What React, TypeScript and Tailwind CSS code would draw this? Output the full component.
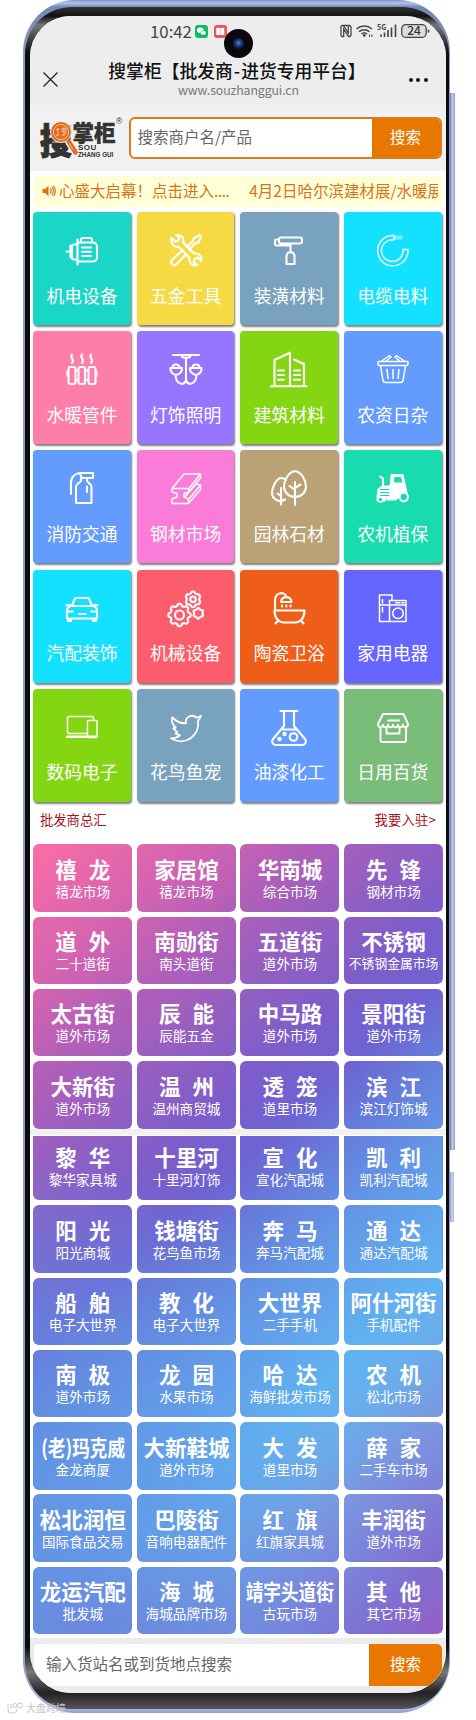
import React from 'react'

interface Category {
  name: string;
  color: string;
  icon: React.ReactNode;
}

const gear = (cx: number, cy: number, r: number, teeth: number) => {
  const points: Array<string> = [];
  const steps = teeth * 12;
  for (let i = 0; i < steps; i++) {
    const a = (i / steps) * Math.PI * 2;
    const wave = Math.max(-0.6, Math.min(0.6, Math.cos(a * teeth)));
    const d = r * (0.9 + 0.15 * wave);
    points.push(`${(cx + d * Math.sin(a)).toFixed(2)} ${(cy - d * Math.cos(a)).toFixed(2)}`);
  }
  return `M${points.join('L')}Z`;
}

const categories: Array<Category> = [
  { name: '机电设备', color: 'bg-[#1ad6c6]', icon: <path d="M19 12V9.5a1.5 1.5 0 0 1 1.5-1.5h8a1.5 1.5 0 0 1 1.5 1.5V12M15.5 12.5h15.500a4 4 0 0 1 4 4v11a4 4 0 0 1-4 4H15.500M15.500 9.500v25M15.500 14.500H12a2 2 0 0 0-2 2V27.500a2 2 0 0 0 2 2h3.500M8.500 15.500v12M4.500 21.500h4M20 17.500h9M20 21.800h9M20 26h9" /> },
  { name: '五金工具', color: 'bg-[#f6da43]', icon: <path d="M5.500 8l4 3.500 3-1 .8-3.500L10 5.200c4-1 7.500 1.500 7.500 5 0 1-.1 1.600-.4 2.400l11 11c4.500-.8 8 2.500 7 7.400l-3.500-3.300-3 1-1 3.200 3.500 3.200c-5 1.200-8.600-2.500-7.600-7.400l-10.800-11C8 18 4.300 13.500 5.500 8zM16 20.500L6 30c-2.500 3 1.500 7 4.500 4.300L20 24.500M20.500 17l6.500-6 1-3 5.500-3L35 6.500l-2.500 6-3.500 1-6 6.200" /> },
  { name: '装潢材料', color: 'bg-[#79a2bf]', icon: <path d="M12 7.500h19a2 2 0 0 1 2 2v2a2 2 0 0 1-2 2H12a2 2 0 0 1-2-2v-2a2 2 0 0 1 2-2zM10 9.500H7.500A1.500 1.500 0 0 0 6 11v3a1.500 1.500 0 0 0 1.500 1.500H21.500V22M19 22.500h5l1.500 3v8.500h-8v-8.500z" /> },
  { name: '电缆电料', color: 'bg-[#14e1ff]', icon: <><path strokeWidth="1.400" d="M21 5.500A15.200 15.200 0 1 0 35 19.500H30A10.800 10.800 0 1 1 21 10Z" /><path strokeWidth=".6" d="M21 6h8M21 7.500h8M21 9h8" /></> },
  { name: '水暖管件', color: 'bg-[#fd7ea8]', icon: <path d="M8.500 18h3a2 2 0 0 1 2 2v13a2 2 0 0 1-2 2h-3a2 2 0 0 1-2-2V20a2 2 0 0 1 2-2zM18.500 18h2.500a2 2 0 0 1 2 2v13a2 2 0 0 1-2 2h-2.500a2 2 0 0 1-2-2V20a2 2 0 0 1 2-2zM28.500 18h3a2 2 0 0 1 2 2v13a2 2 0 0 1-2 2h-3a2 2 0 0 1-2-2V20a2 2 0 0 1 2-2zM13.500 21.500h3M13.500 31h3M23 21.500h3.500M23 31h3.500M5.500 22.500v4M34.500 22.500v4M10 5.500c-3 3.500 3.500 4.500 0 8.500M20 5.500c-3 3.500 3.500 4.500 0 8.500M29 5.500c-3 3.500 3.500 4.500 0 8.500" /> },
  { name: '灯饰照明', color: 'bg-[#9775ff]', icon: <path d="M7 6h26M15.500 6.500c0 3 9 3 9 0M20 9v23.500M4.500 19h11.500M24 19h11.500M6.500 18.500c0-4 7-4 7 0M26.500 18.500c0-4 7-4 7 0M4.500 19c-.5 3.500 2 6.500 5.500 7 3.500-.5 6.500-3.500 6-7M24 19c-.5 3.500 2.500 6.500 6 7 3.500-.5 6-3.500 5.500-7M9.500 26c.5 9.500 8 11 10.500 5.500 2.500 5.500 10 4 10.500-5.500" /> },
  { name: '建筑材料', color: 'bg-[#84d512]', icon: <path d="M2 37.300h35.500M5.500 37V11L21 3.700V37M25 10.500l10 4.500v22M9 21.500h6M9 26h6M9 30.700h6M25 21.500h6M25 26h6M25 30.700h6" /> },
  { name: '农资日杂', color: 'bg-[#639bff]', icon: <path strokeWidth="1.500" d="M5.500 12.500h29a.8.8 0 0 1 .5 1v1.500a1.500 1.500 0 0 1-1.500 1.500h-27A1.500 1.500 0 0 1 5 15v-1.500zM7.500 16.500l2.500 15a2.500 2.500 0 0 0 2.500 2h15a2.500 2.500 0 0 0 2.500-2l2.500-15M14 20.500l1 9M20 20.500v9M26 20.500l-1 9M8 12.500l8.500-6 1.500 1.500-5.500 4.500M32 12.500l-8.500-6-1.500 1.500 5.500 4.500" /> },
  { name: '消防交通', color: 'bg-[#639bff]', icon: <path d="M9 26V15C9 9 13 5.500 18 5h13v5h-5.500M18 6l2 4h5v2.500c0 2 4.500 3.500 4.500 6V35H14V18.500c0-3 5-3.500 5-6V10.500M25 18.500V24" /> },
  { name: '钢材市场', color: 'bg-[#fa7bd8]', icon: <path strokeWidth="1.500" d="M6 20.500L18 6h16.500L23 20.500zM6 20.500V24l5 1.500v3.500L6 31v4.500h16.500V31L18 29v-3.500l5-1.500v-3.500M34.500 6v4L23 24M34.500 17v4.500L22.500 35.500M19 29L30 16l4.500 1M23 31l11.500-14M18 26.500l2-2" /> },
  { name: '园林石材', color: 'bg-[#bba276]', icon: <path d="M26 3.200c6 0 11 9 11 15.500a11 10.300 0 0 1-22 0c0-6.500 5-15.500 11-15.500zM26 14v23M20.500 18l5.500 4M31.500 16.500L26 20M17 12c-1.500-1.500-3-2-4.500-2C7.500 10 3 19 3 25c0 6 7 10 13 6.500M12 20v16.500M8.500 25.500L12 28" /> },
  { name: '农机植保', color: 'bg-[#18dcae]', icon: <><path fill="#fff" strokeWidth="1" d="M18.500 6.500H30l4.500 20.500H28l-5 5h-9V19l3-2zM5 21l4-3h6v12H5zM4.500 27h8v6h-8z" /><path d="M7 8.500l3 2V18" /><path fill="#18dcae" stroke="none" d="M22 9h6l1.500 5.500H21V10z" /><path stroke="#18dcae" strokeWidth="1.200" d="M7.500 21.500H16M7.500 24.500H16M7.500 27.500H16" /><circle cx="30.700" cy="29" r="4.200" fill="#18dcae" /><circle cx="7.500" cy="31.500" r="2.500" fill="#18dcae" strokeWidth="1.500" /></> },
  { name: '汽配装饰', color: 'bg-[#14e1ff]', icon: <path d="M10 18l2.500-6.500a2 2 0 0 1 2-1.500h11a2 2 0 0 1 2 1.500L30 18M4.500 17H8M32 17h3.500M8.500 18h23M8.500 18C6 19 5 20 5 22v8.500h30V22c0-2-1-3-3.500-4M6 30.500v2.500h3v-2.500M31 30.500v2.500h3v-2.500M5.500 23.500H11M34.500 23.500H29M17 26h6.500" /> },
  { name: '机械设备', color: 'bg-[#fc5d6c]', icon: <><path d={gear(13.500, 27, 11.300, 8)} /><circle cx="13.500" cy="27" r="4.500" /><path d={gear(27, 11.300, 7.800, 6)} /><circle cx="27" cy="11.300" r="2.800" /><path d={gear(32.300, 25.300, 5.200, 6)} /></> },
  { name: '陶瓷卫浴', color: 'bg-[#ef5e18]', icon: <path d="M6 22.500V12.500C6 4 16 3 17.500 9M12 14c0-6.500 10.500-6.500 10.500 0zM13 17.500v1M17.300 17.500v1M21.500 17.500v1M5.500 22.500H35.500c0 7-3.500 12-9.500 12H15c-6 0-9.500-5-9.500-12zM9.500 32l-3 3.500M31.500 32l3 3.500" /> },
  { name: '家用电器', color: 'bg-[#6565ff]', icon: <path strokeWidth="1.500" d="M6.500 7H19v5.500M6.500 7v26.500h26.500V12.500H16.500v21M6.500 17h10M16.500 17H33M9.500 11.500V15M9.500 19.500v4.500M22.500 14.800h4M28.500 14.800h2.500M25 20a5 5 0 1 1 0 10.500a5 5 0 1 1 0-10.500" /> },
  { name: '数码电子', color: 'bg-[#84d512]', icon: <><path strokeWidth="1.500" d="M31.500 13V11a1.500 1.500 0 0 0-1.500-1.500H7A1.500 1.500 0 0 0 5.500 11v14A1.500 1.500 0 0 0 7 26.500h18M4.500 30.300H25M26.500 13.500h7.500a1 1 0 0 1 1 1v15a1 1 0 0 1-1 1h-7.500a1 1 0 0 1-1-1v-15a1 1 0 0 1 1-1z" /><path strokeWidth="2.200" d="M5 29.500h19M27 29.500h6.500" /></> },
  { name: '花鸟鱼宠', color: 'bg-[#79a2bf]', icon: <path transform="translate(2 2.800) scale(1.500)" strokeWidth="1.250" d="M22 4s-.7 2.100-2 3.400c1.600 10-9.400 17.300-18 11.600 2.200.1 4.400-.6 6-2l-3-1.200 1.200-.9-2.700-2.600 1.600-.5C2.500 9.300 1.800 7.300 3 5c2.200 2.600 5.600 4.100 9 4-.9-4.200 4-6.600 7-3.800 1.100 0 3-1.200 3-1.200z" /> },
  { name: '油漆化工', color: 'bg-[#639bff]', icon: <><path d="M11.500 4h17M15 4v15L4 32c-2 3-.5 6 3 6h26c3.500 0 5-3 3-6L25 19V4M12 22.500h16" /><circle cx="24.500" cy="30" r="3.800" /><circle cx="15.500" cy="27" r="1.200" fill="#fff" /><circle cx="10.500" cy="32" r="1.200" fill="#fff" /></> },
  { name: '日用百货', color: 'bg-[#7abd7b]', icon: <path strokeWidth="1.900" d="M10 7h20.500l4.500 10c0 4-4.500 4-5 .8-.5 3.200-4.700 3.200-5 0-.3 3.200-4.700 3.200-5 0-.3 3.200-4.700 3.200-5 0-.3 3.200-4.700 3.200-5 0C9.500 21 5 21 5 17zM7.500 21v12.500A1.500 1.500 0 0 0 9 35h22.500a1.500 1.500 0 0 0 1.500-1.500V21M13.500 21v5.500h13V21M15 13.500h11" /> },
];

const markets: Array<Array<[string, string]>> = [
  [['禧龙', '禧龙市场'], ['家居馆', '禧龙市场'], ['华南城', '综合市场'], ['先锋', '钢材市场']],
  [['道外', '二十道街'], ['南勋街', '南头道街'], ['五道街', '道外市场'], ['不锈钢', '不锈钢金属市场']],
  [['太古街', '道外市场'], ['辰能', '辰能五金'], ['中马路', '道外市场'], ['景阳街', '道外市场']],
  [['大新街', '道外市场'], ['温州', '温州商贸城'], ['透笼', '道里市场'], ['滨江', '滨江灯饰城']],
  [['黎华', '黎华家具城'], ['十里河', '十里河灯饰'], ['宣化', '宣化汽配城'], ['凯利', '凯利汽配城']],
  [['阳光', '阳光商城'], ['钱塘街', '花鸟鱼市场'], ['奔马', '奔马汽配城'], ['通达', '通达汽配城']],
  [['船舶', '电子大世界'], ['教化', '电子大世界'], ['大世界', '二手手机'], ['阿什河街', '手机配件']],
  [['南极', '道外市场'], ['龙园', '水果市场'], ['哈达', '海鲜批发市场'], ['农机', '松北市场']],
  [['(老)玛克威', '金龙商厦'], ['大新鞋城', '道外市场'], ['大发', '道里市场'], ['薛家', '二手车市场']],
  [['松北润恒', '国际食品交易'], ['巴陵街', '音响电器配件'], ['红旗', '红旗家具城'], ['丰润街', '道外市场']],
  [['龙运汽配', '批发城'], ['海城', '海城品牌市场'], ['靖宇头道街', '古玩市场'], ['其他', '其它市场']],
];

// one gradient runs over the whole grid, every tile shows its own part of it
const GRADIENT = 'radial-gradient(ellipse 330px 190px at 15% 100%,rgba(110,124,216,.75) 0%,rgba(104,140,224,.4) 50%,rgba(104,150,228,0) 100%),'
  + 'radial-gradient(ellipse 300px 330px at 0% 80%,rgba(98,152,230,.7) 0%,rgba(98,152,230,.45) 50%,rgba(98,152,230,0) 100%),'
  + 'linear-gradient(138deg,#fb6da5 0%,#d163b1 13.500%,#af5fb9 21.500%,#925fc2 29.500%,#7b5dcb 37.500%,#6e63d2 43.500%,#657fdc 50%,#6396e6 56.500%,#62a4ec 62.500%,#60b3f1 69%,#6cabea 75%,#7a96e0 81%,#7e80d8 87.500%,#826bcf 93.500%,#9561c6 100%)';

const MarketTile = ({ market, row, col }: { market: [string, string], row: number, col: number }) => {
  const [title, subtitle] = market;
  const short = title.length === 2;
  const squeezed = title.length > 4;
  return (
    <div
      className={`flex flex-col items-center overflow-hidden whitespace-nowrap text-white ${row === 4 ? 'h-[64px] rounded-b-[6px] pt-[6px]' : 'h-[67.500px] rounded-[6px] pt-[9.500px]'}`}
      style={{
        backgroundImage: GRADIENT,
        backgroundSize: '409.500px 791px',
        backgroundPosition: `${-col * 103.6}px ${-row * 72.3}px`,
      }}>
      <div className={`text-[21.500px] font-bold leading-[30px] ${short ? 'flex gap-[12px]' : ''} ${squeezed ? 'scale-x-[0.82]' : ''}`}>
        {short ? <><span>{title[0]}</span><span>{title[1]}</span></> : title}
      </div>
      <div className={`leading-[18px] -mt-[2px] ${subtitle.length > 6 ? 'text-[12.800px]' : 'text-[13.600px]'}`}>{subtitle}</div>
    </div>
  )
}

const StatusBar = () => (
  <div className="relative flex h-[29px] items-center pt-[1px]">
    <span className="ml-[120px] w-[44px] text-[16.800px] leading-none text-[#444]">10:42</span>
    <svg className="ml-px h-[13px] w-[13px]" viewBox="0 0 13 13">
      <rect width="13" height="13" rx="3" fill="#0bc15f" />
      <ellipse cx="5.300" cy="5.300" rx="3.300" ry="2.700" fill="#fff" />
      <ellipse cx="8.300" cy="7.800" rx="2.800" ry="2.200" fill="#fff" stroke="#0bc15f" strokeWidth=".5" />
    </svg>
    <svg className="ml-[6px] h-[13px] w-[13px]" viewBox="0 0 13 13">
      <rect width="13" height="13" rx="3" fill="#e8575c" />
      <path d="M2.300 3.200c1.500-.6 3-.5 4 .3 1-.8 2.500-.9 4-.3v6.800H2.300z" fill="#fff" />
      <path d="M6.400 3.500V10" stroke="#e8a0a2" strokeWidth=".6" />
    </svg>
    <svg className="ml-[113px] h-[16px] w-[90px]" viewBox="0 0 90 16" fill="none" stroke="#444" strokeWidth="1.300">
      <path d="M2.500 2.500H9a2 2 0 0 1 2 2v7a2 2 0 0 1-2 2H8.500L3.700 6v7.500H2.500a1.500 1.500 0 0 1-1.500-1.500V4a1.500 1.500 0 0 1 1.500-1.500zM3.500 2.500l4.800 7.500V2.500" />
      <path d="M16.500 6c4.500-4 11-4 15.500 0M19 8.700c3-2.700 7.500-2.700 10.500 0M21.500 11c1.500-1.500 4-1.500 5.500 0" strokeWidth="1.500" />
      <circle cx="24.300" cy="12.500" r="1.400" fill="#444" stroke="none" />
      <path d="M29.500 11.500v2.500M32 11.500v2.500" strokeWidth="1" />
      <text x="37" y="6.500" fontSize="7" fontWeight="700" fill="#444" stroke="none">5G</text>
      <path d="M41 14V11.500M44.500 14V9.500M48 14V7M51.500 14V4.500M55.500 14V1.500" strokeWidth="1.600" />
      <rect x="61.700" y="1.700" width="24.500" height="12.600" rx="4" fill="#ddd" />
      <path d="M88.500 6.500v3" strokeWidth="1.500" />
      <text x="74" y="12.200" fontSize="12" fontWeight="500" textAnchor="middle" fill="#333" stroke="none">24</text>
    </svg>
    <div className="absolute left-[193.500px] top-[13px] flex h-[29px] w-[29px] items-center justify-center rounded-full bg-[#08080d]">
      <div className="h-[11px] w-[11px] rounded-full bg-[radial-gradient(circle_at_50%_45%,#5c86dc_0%,#203a80_35%,#0b1430_75%)]" />
    </div>
  </div>
)

const TitleBar = () => (
  <div className="flex h-[60px] justify-between pl-[13px] pr-[18px] text-[#111]">
    <svg className="mt-[27px] h-[15px] w-[15px]" viewBox="0 0 15 15" stroke="#222" strokeWidth="1.300">
      <path d="M.5.5l14 14M14.500.5l-14 14" />
    </svg>
    <div className="flex flex-col items-center whitespace-nowrap pt-[12px]">
      <div className="ml-[7px] text-[17.800px] font-medium leading-[26px]">搜掌柜【批发商<span className="mx-[1px]">-</span>进货专用平台】</div>
      <div className="ml-[10px] text-[12.300px] leading-[15px] tracking-[-0.1px] text-[#777]">www.souzhanggui.cn</div>
    </div>
    <div className="flex gap-[3.500px] pt-[32.500px]">
      <span className="h-[4px] w-[4px] rounded-full bg-[#111]" />
      <span className="h-[4px] w-[4px] rounded-full bg-[#111]" />
      <span className="h-[4px] w-[4px] rounded-full bg-[#111]" />
    </div>
  </div>
)

const Logo = () => (
  <div className="relative h-[42px] w-[88px] shrink-0 text-[#333]">
    <span className="absolute left-[.5px] top-[4px] origin-left scale-x-[0.9] text-[35.500px] font-black leading-[36px] [-webkit-text-stroke:1.200px_#333]">搜</span>
    <svg className="absolute left-[10px] top-[3px] h-[38px] w-[30px]" viewBox="0 0 30 38">
      <path d="M19 21l8 13" stroke="#f0f0f0" strokeWidth="7" />
      <circle cx="12" cy="12" r="10.500" fill="#e06a1f" stroke="#f0f0f0" strokeWidth="1" />
      <circle cx="12" cy="12" r="7.600" fill="none" stroke="#f6c39e" strokeWidth="1" />
      <path d="M9 8v8M7 9.500h3.500M7 15.500l3-1M13 8.500h4v3h-4zM15 7v9M12.500 16l5-3.500" stroke="#f6c39e" strokeWidth="1" fill="none" />
      <path d="M20 22l6.500 10.500" stroke="#e06a1f" strokeWidth="4.500" strokeLinecap="round" />
      <path d="M20 23l4 6.500" stroke="#f6c39e" strokeWidth="1" />
    </svg>
    <span className="absolute left-[33.500px] top-[4px] text-[21.500px] font-black leading-[22px] [-webkit-text-stroke:.4px_#333]">掌柜</span>
    <span className="absolute left-[39px] top-[27px] font-['Liberation_Sans'] text-[8px] font-bold leading-[7px] tracking-[.5px]">SOU</span>
    <span className="absolute left-[39px] top-[34px] whitespace-nowrap font-['Liberation_Sans'] text-[6.300px] font-bold leading-[7px]">ZHANG GUI</span>
    <span className="absolute left-[77px] top-0 font-['Liberation_Sans'] text-[8.500px] leading-[8px]">®</span>
  </div>
)

const App: React.FC = () => {
  return (
    <div className="relative h-[1720px] w-[476px] overflow-hidden bg-white font-['Noto_Sans_CJK_SC','Noto_Sans',sans-serif]">
      <div className="absolute left-[450px] top-[93px] h-[1057px] w-[5px] bg-[linear-gradient(90deg,#64688a,#c9d0f2_40%,#8e98c8)]" />
      <div className="absolute left-[450px] top-[1172px] h-[50px] w-[4px] bg-[linear-gradient(90deg,#8a8fb2,#d3d9f6_50%,#a4add6)]" />
      <div className="relative ml-[23px] h-[1713px] w-[427px] rounded-[52px] bg-[linear-gradient(180deg,#7e8cc0_0px,#b5c5ee_3px,#7587b8_7px,#8f9bc8_60px,#8f9bc8_1650px,#aab4e0_1709px,#8f9ac8_1713px)] pb-[4px] pl-[2px] pr-px pt-[7px]">
        <div className="h-[1702px] rounded-[47px] bg-[linear-gradient(180deg,#333_0px,#111_9px,#777_18px,#111_45px,#0c0c10_60px,#0c0c10_1640px,#777_1665px,#222_1686px,#555_1702px)] pl-[5px] pr-[3px] pt-[9px]">
          <div className="h-[1677px] w-[416px] overflow-hidden rounded-[41px] bg-white">
            <div className="bg-[#ededed]">
              <StatusBar />
              <TitleBar />
            </div>
            <div className="flex h-[66px] items-start bg-[#f1f1f1] pl-[9px] pt-[12px]">
              <Logo />
              <div className="ml-[2px] flex h-[42px] w-[312.500px] overflow-hidden rounded-[6px] border-2 border-[#e07a1c] bg-white">
                <div className="flex flex-1 items-center pl-[6.500px] pb-[2px] text-[15.500px] text-[#666]">搜索商户名/产品</div>
                <button className="w-[68px] bg-[#e87700] pb-[2px] text-[15.500px] text-white">搜索</button>
              </div>
            </div>

            <div className="mx-[4px] mt-[4.500px] flex h-[31.500px] items-center overflow-hidden bg-[#ffffd8] pl-[8px] pr-[4px] text-[#d9731a]">
              <svg className="h-[12px] w-[14px] shrink-0" viewBox="0 0 14 12" fill="none" stroke="#d9731a" strokeWidth="1.200">
                <path d="M.5 4h2.500L6.500.8v10.400L3 8H.5z" fill="#d9731a" stroke="none" />
                <path d="M8 3.500c1.300 1.500 1.300 3.500 0 5M9.800 2c2.200 2.500 2.200 5.500 0 8M11.500.8c2.500 3 2.500 7.500 0 10.400" />
              </svg>
              <div className="ml-[3px] flex-1 overflow-hidden whitespace-nowrap pb-[2px] text-[15.500px] leading-[24px]">
                <span className="mr-[20px]">心盛大启幕！点击进入<span className="tracking-[-.5px]">....</span></span>
                <span>4月2日哈尔滨建材展/水暖展</span>
              </div>
            </div>

            <div className="ml-[3.300px] mt-[5px] grid grid-cols-[repeat(4,97.500px)] gap-x-[6.100px] gap-y-[6.200px]">
              {categories.map(category => (
                <div key={category.name} className={`flex h-[113px] flex-col items-center rounded-[4px] pt-[18px] shadow-[1px_1.500px_2px_rgba(0,0,0,0.5)] ${category.color}`}>
                  <svg className="h-[40px] w-[40px]" viewBox="0 0 40 40" fill="none" stroke="#fff" strokeWidth="2.100" strokeLinecap="round" strokeLinejoin="round">
                    {category.icon}
                  </svg>
                  <div className="mt-[11.500px] text-[17.800px] leading-[26px] text-white">{category.name}</div>
                </div>
              ))}
            </div>

            <div className="flex h-[42px] justify-between pl-[10px] pr-[10px] pt-[8px] text-[13.300px] leading-[20px] text-[#a8131c]">
              <span>批发商总汇</span>
              <span className="tracking-[.2px]">我要入驻&gt;</span>
            </div>

            <div className="flex flex-col gap-[4.800px] pt-[.5px]">
              {markets.map((row, r) => (
                <div key={r} className={r === 4 ? '-mt-[4px] border-t-[6px] border-[#f1f1f1] pt-px' : ''}>
                  <div className="ml-[3.300px] grid grid-cols-[repeat(4,99px)] gap-x-[4.600px]">
                    {row.map((market, c) => <MarketTile key={market[0]} market={market} row={r} col={c} />)}
                  </div>
                </div>
              ))}
            </div>

            <div className="mt-[4px] h-[60px] bg-[#ececec] pl-[4px] pt-[6px]">
              <div className="flex h-[41.500px] w-[408px] overflow-hidden rounded-[5px] bg-white">
                <div className="flex flex-1 items-center pl-[12px] pb-[2px] text-[15.500px] text-[#666]">输入货站名或到货地点搜索</div>
                <button className="w-[73px] bg-[#e87700] pb-[2px] text-[15.500px] text-white">搜索</button>
              </div>
            </div>
          </div>
        </div>
      </div>
      <div className="absolute left-[6px] top-[1701px] flex items-center gap-[2px] text-[10px] leading-[14px] text-[#c4c4c4]">
        <svg className="h-[12px] w-[18px]" viewBox="0 0 18 12" fill="none" stroke="#c8c8c8">
          <path d="M2 2v6a3 3 0 0 0 3 3h2a4 4 0 0 0 4-4M5 2v4" />
          <circle cx="9" cy="3.500" r="2" />
          <circle cx="14" cy="3.500" r="2.500" />
        </svg>
        <span>大盘跨境</span>
      </div>
    </div>
  )
}

export default App
